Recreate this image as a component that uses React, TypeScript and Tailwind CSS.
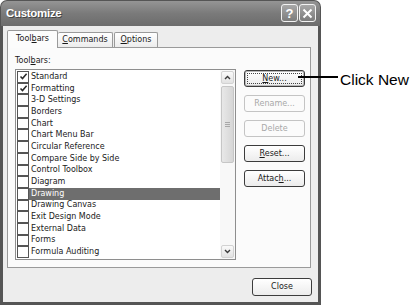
import React from "react";

const items: { label: string; checked?: boolean; selected?: boolean }[] = [
  { label: "Standard", checked: true },
  { label: "Formatting", checked: true },
  { label: "3-D Settings" },
  { label: "Borders" },
  { label: "Chart" },
  { label: "Chart Menu Bar" },
  { label: "Circular Reference" },
  { label: "Compare Side by Side" },
  { label: "Control Toolbox" },
  { label: "Diagram" },
  { label: "Drawing", selected: true },
  { label: "Drawing Canvas" },
  { label: "Exit Design Mode" },
  { label: "External Data" },
  { label: "Forms" },
  { label: "Formula Auditing" },
];

const ui = { fontFamily: '"DejaVu Sans", Tahoma, sans-serif' };

function Check() {
  return (
    <svg width="9" height="9" viewBox="0 0 9 9">
      <path d="M1.5 4.5 L3.5 6.6 L7.6 1.8" fill="none" stroke="#2a2a2a" strokeWidth="1.5" />
    </svg>
  );
}

function Btn({
  children,
  disabled,
  def,
}: {
  children: React.ReactNode;
  disabled?: boolean;
  def?: boolean;
}) {
  return (
    <div
      className={`w-[61px] h-[17px] rounded-[3px] border flex items-center justify-center text-[8px] leading-none ${
        disabled
          ? "border-[#c4c4c4] text-[#a8a8a8] bg-[#fbfbfb]"
          : def
          ? "border-[#3a3a3a] text-[#1a1a1a] bg-gradient-to-b from-[#ffffff] to-[#ececec] shadow-[inset_0_0_0_1px_#b8b8b8]"
          : "border-[#3c3c3c] text-[#1a1a1a] bg-gradient-to-b from-[#ffffff] to-[#ececec]"
      }`}
    >
      {def ? (
        <div className="w-[55px] h-[11px] border border-dotted border-[#444] flex items-center justify-center">
          {children}
        </div>
      ) : (
        children
      )}
    </div>
  );
}

export default function App() {
  return (
    <div className="w-[413px] h-[305px] bg-white relative flex overflow-hidden" style={ui}>
      {/* Window */}
      <div className="w-[321px] h-[305px] flex flex-col shrink-0">
        {/* Title bar */}
        <div className="h-[26px] rounded-t-[7px] bg-gradient-to-b from-[#959595] via-[#7a7a7a] to-[#6c6c6c] flex items-center pl-[5px] pr-[4px] border-x border-t border-[#555]">
          <span
            className="text-white font-bold text-[11.5px] flex-1 tracking-[-0.3px]"
            style={{ fontFamily: '"Liberation Sans", Arial, sans-serif', textShadow: "1px 1px 0 #444" }}
          >
            Customize
          </span>
          <div className="flex gap-[1px] mb-[1px]">
            <div className="w-[17px] h-[18px] rounded-[3px] border border-[#f2f2f2] bg-gradient-to-b from-[#a8a8a8] to-[#7c7c7c] flex items-center justify-center text-white font-bold text-[13px] leading-none" style={{ fontFamily: '"Liberation Sans", Arial, sans-serif' }}>
              ?
            </div>
            <div className="w-[17px] h-[18px] rounded-[3px] border border-[#f2f2f2] bg-gradient-to-b from-[#a8a8a8] to-[#7c7c7c] flex items-center justify-center">
              <svg width="11" height="11" viewBox="0 0 11 11">
                <path d="M1.5 1.5 L9.5 9.5 M9.5 1.5 L1.5 9.5" stroke="white" strokeWidth="2" />
              </svg>
            </div>
          </div>
        </div>
        {/* Body */}
        <div className="flex-1 border-l-[3px] border-r-[3px] border-b-[3px] border-[#555] bg-[#ededed] flex flex-col">
          {/* Tabs */}
          <div className="flex items-end pl-[4px] pt-[4px] h-[21px] relative z-10 text-[8px] text-[#1a1a1a]">
            <div className="h-[18px] w-[51px] bg-[#fcfcfc] border-x border-t border-[#9a9a9a] rounded-t-[2px] flex items-center justify-center -mb-px pb-[1px]">
              <span>
                Tool<span className="underline">b</span>ars
              </span>
            </div>
            <div className="h-[15px] w-[55px] bg-gradient-to-b from-[#ffffff] to-[#ececec] border-r border-t border-[#9a9a9a] rounded-t-[2px] flex items-center justify-center">
              <span>
                <span className="underline">C</span>ommands
              </span>
            </div>
            <div className="h-[15px] w-[44px] ml-[1px] bg-gradient-to-b from-[#ffffff] to-[#ececec] border-x border-t border-[#9a9a9a] rounded-t-[2px] flex items-center justify-center">
              <span>
                <span className="underline">O</span>ptions
              </span>
            </div>
          </div>
          {/* Panel */}
          <div className="ml-[4px] w-[304px] h-[221px] border border-[#9a9a9a] bg-[#fbfbfb] pl-[7px] pt-[8px] text-[8px] text-[#1a1a1a]">
            <div className="h-[13px] leading-[10px]">
              Tool<span className="underline">b</span>ars:
            </div>
            <div className="flex items-start">
              {/* Listbox */}
              <div className="w-[221px] h-[191px] border border-[#8e8e8e] bg-white flex">
                <div className="flex-1 pt-[1px] pl-[1px]">
                  {items.map((it) => (
                    <div key={it.label} className="h-[11.7px] flex items-center">
                      <div className="w-[12px] h-[11.7px] border border-[#555] bg-white flex items-center justify-center shrink-0">
                        {it.checked ? <Check /> : null}
                      </div>
                      <div
                        className={`flex-1 h-[11.7px] flex items-center pl-[2px] ${
                          it.selected ? "bg-[#6e6e6e] text-white" : ""
                        }`}
                      >
                        {it.label}
                      </div>
                    </div>
                  ))}
                </div>
                {/* Scrollbar */}
                <div className="w-[15px] h-full bg-[#f8f8f8] flex flex-col items-center pt-[1px] pb-[1px]">
                  <div className="w-[13px] h-[13px] rounded-[2px] border border-[#d2d2d2] bg-gradient-to-b from-[#fafafa] to-[#e2e2e2] flex items-center justify-center">
                    <svg width="7" height="5" viewBox="0 0 7 5">
                      <path d="M1 4 L3.5 1.5 L6 4" fill="none" stroke="#3a3a3a" strokeWidth="1.4" />
                    </svg>
                  </div>
                  <div className="mt-[2px] w-[13px] h-[77px] rounded-[2px] border border-[#c6c6c6] bg-gradient-to-r from-[#e8e8e8] to-[#d6d6d6] flex flex-col items-center justify-center gap-[1px]">
                    <div className="w-[5px] h-px bg-[#a8a8a8]" />
                    <div className="w-[5px] h-px bg-[#a8a8a8]" />
                    <div className="w-[5px] h-px bg-[#a8a8a8]" />
                  </div>
                  <div className="flex-1" />
                  <div className="w-[13px] h-[13px] rounded-[2px] border border-[#d2d2d2] bg-gradient-to-b from-[#fafafa] to-[#e2e2e2] flex items-center justify-center">
                    <svg width="7" height="5" viewBox="0 0 7 5">
                      <path d="M1 1 L3.5 3.5 L6 1" fill="none" stroke="#3a3a3a" strokeWidth="1.4" />
                    </svg>
                  </div>
                </div>
              </div>
              {/* Buttons */}
              <div className="ml-[8px] mt-[1px] flex flex-col gap-[8px]">
                <Btn def>
                  <span>
                    <span className="underline">N</span>ew...
                  </span>
                </Btn>
                <Btn disabled>Rename...</Btn>
                <Btn disabled>Delete</Btn>
                <Btn>
                  <span>
                    <span className="underline">R</span>eset...
                  </span>
                </Btn>
                <Btn>
                  <span>
                    Attac<span className="underline">h</span>...
                  </span>
                </Btn>
              </div>
            </div>
          </div>
          {/* Close */}
          <div className="flex justify-end pr-[6px] mt-[10px]">
            <div className="w-[60px] h-[18px] rounded-[3px] border border-[#3c3c3c] bg-gradient-to-b from-[#ffffff] to-[#ececec] flex items-center justify-center text-[8px] text-[#1a1a1a]">
              Close
            </div>
          </div>
        </div>
      </div>
      {/* Annotation */}
      <div className="flex-1 pt-[68px] pl-[19px]">
        <span
          className="text-[15.5px] text-black leading-none"
          style={{ fontFamily: '"Liberation Sans", Arial, sans-serif' }}
        >
          Click New
        </span>
      </div>
      <div className="absolute left-[298px] top-[76px] w-[40px] h-[2px] bg-black" />
    </div>
  );
}
